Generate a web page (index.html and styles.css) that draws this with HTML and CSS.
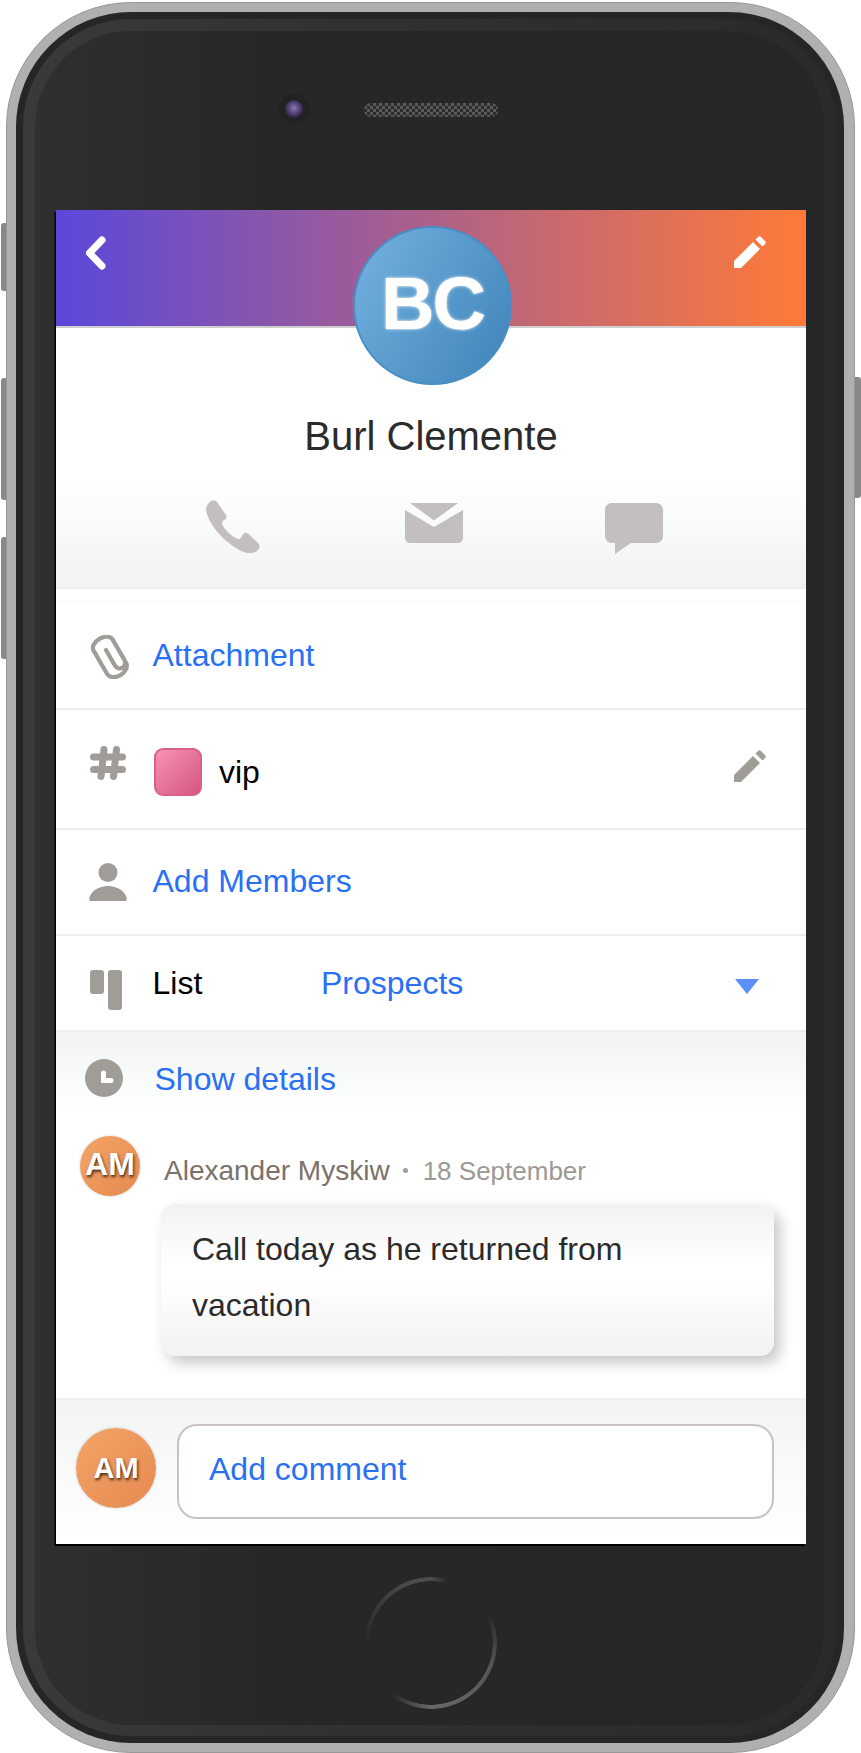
FILE: index.html
```html
<!DOCTYPE html>
<html lang="en">
<head>
<meta charset="utf-8">
<title>Burl Clemente</title>
<link rel="stylesheet" href="styles.css">
</head>
<body>
<div class="device">
  <span class="side-btn btn-mute"></span>
  <span class="side-btn btn-up"></span>
  <span class="side-btn btn-down"></span>
  <span class="side-btn btn-power"></span>
  <div class="shell">
    <div class="bezel-dark">
      <div class="bezel-light">
        <div class="face">
          <div class="top-bar">
            <div class="camera"><span class="lens"></span></div>
            <div class="speaker"></div>
          </div>
          <main class="screen">
            <header class="header">
              <svg class="back" viewBox="0 0 21 34"><path d="M17 4 L4.500 17 L17 30" fill="none" stroke="#fff" stroke-width="7" stroke-linecap="round" stroke-linejoin="round"/></svg>
              <svg class="edit-white" viewBox="0 0 32 32"><path fill="#fff" d="M0 32V25L19 6L26 13L7 32ZM21.500 3.500L24 1C25 0 26 0 27 1L31 5C32 6 32 7 31 8L28.500 10.500Z"/></svg>
            </header>
            <section class="profile">
              <div class="avatar-big">BC</div>
              <h1 class="name">Burl Clemente</h1>
              <div class="actions">
                <svg class="ic-phone" viewBox="0 0 54 53"><path fill="#c3bfbe" d="M3 3C5 0 9 0 11 2L20 15C21.500 17 20 19 18 20C16 21 15.500 23 17 26C21 32 26 37 32 39C34 39.500 35 38 36.500 35C38 32.500 40 32 42 33.500L52 43C54 45 54 48 52 50C49 53 44 54 39 52.500C24 47 6 30 1 14C-.5 9 0 6 3 3Z"/></svg>
                <svg class="ic-mail" viewBox="0 0 58 40"><path fill="#c3bfbe" d="M5 0H53L29 17.500ZM0 7L29 24L58 7V34C58 38 56 40 52 40H6C2 40 0 38 0 34Z"/></svg>
                <svg class="ic-chat" viewBox="0 0 58 51"><path fill="#c3bfbe" d="M7 0H51C55 0 58 3 58 7V33C58 37 55 40 51 40H26L10 51V40H7C3 40 0 37 0 33V7C0 3 3 0 7 0Z"/></svg>
              </div>
            </section>
            <div class="spacer"></div>
            <div class="row row-attach">
              <svg class="ic-clip" viewBox="0 0 41 44"><g transform="rotate(-30 20 22)"><path fill="none" stroke="#a09d98" stroke-width="4.200" stroke-linecap="round" d="M20 14V32A5 5 0 0 0 31 32V8A11 7 0 0 0 9 8V35A11 8 0 0 0 31 35"/></g></svg>
              <a class="link">Attachment</a>
            </div>
            <div class="row row-tag">
              <svg class="ic-hash" viewBox="0 0 36 34"><path fill="none" stroke="#a09d98" stroke-width="7" stroke-linecap="round" d="M3.500 11H32.500M3.500 23.500H32.500M14 3.500L11 30.500M26.500 3.500L23.500 30.500"/></svg>
              <span class="tag-swatch"></span>
              <span class="tag-text">vip</span>
              <svg class="edit-gray" viewBox="0 0 32 32"><path fill="#a09d98" d="M0 32V25L19 6L26 13L7 32ZM21.500 3.500L24 1C25 0 26 0 27 1L31 5C32 6 32 7 31 8L28.500 10.500Z"/></svg>
            </div>
            <div class="row row-members">
              <svg class="ic-person" viewBox="0 0 38 38"><circle cx="19" cy="9.500" r="9.500" fill="#a09d98"/><path fill="#a09d98" d="M2 38C0 38 0 36 .5 34.500C2 28 10 23 19 23C28 23 36 28 37.500 34.500C38 36 38 38 36 38Z"/></svg>
              <a class="link">Add Members</a>
            </div>
            <div class="row row-list">
              <div class="ic-list"><span class="bar-short"></span><span class="bar-long"></span></div>
              <span class="list-label">List</span>
              <a class="link list-value">Prospects</a>
              <span class="caret"></span>
            </div>
            <section class="activity">
              <div class="details">
                <svg class="ic-clock" viewBox="0 0 38 38"><circle cx="19" cy="19" r="19" fill="#a09d98"/><path fill="none" stroke="#fff" stroke-width="5" stroke-linecap="round" d="M18.500 14V21.500H26"/></svg>
                <a class="link">Show details</a>
              </div>
              <div class="comment-head">
                <div class="avatar-small">AM</div>
                <span class="author">Alexander Myskiw</span>
                <span class="dot"></span>
                <span class="date">18 September</span>
              </div>
              <div class="bubble">Call today as he returned from vacation</div>
            </section>
            <footer class="composer">
              <div class="avatar-medium">AM</div>
              <div class="input"><a class="link">Add comment</a></div>
            </footer>
          </main>
          <div class="home"></div>
        </div>
      </div>
    </div>
  </div>
</div>
</body>
</html>
```
FILE: styles.css
```css
* { box-sizing: border-box; }
html, body { margin: 0; padding: 0; background: #fff; }
body { font-family: "Liberation Sans", Arial, sans-serif; overflow: hidden; }

.device { position: relative; width: 861px; height: 1753px; padding: 2px 6px 0 6px; }
.side-btn { position: absolute; background: #88888c; width: 6px; }
.btn-mute { left: 1px; top: 223px; height: 68px; border-radius: 3px 0 0 3px; }
.btn-up { left: 1px; top: 378px; height: 122px; border-radius: 3px 0 0 3px; }
.btn-down { left: 1px; top: 537px; height: 122px; border-radius: 3px 0 0 3px; }
.btn-power { left: 855px; top: 377px; height: 121px; border-radius: 0 3px 3px 0; }

.shell { position: relative; height: 100%; background: #b0b0b0; border: 1px solid #979797; border-radius: 125px; padding: 9px 10px 9px 9px; }
.bezel-dark { height: 100%; background: #262626; border-radius: 115px; padding: 7px 8px 7px 7px; }
.bezel-light { height: 100%; background: linear-gradient(90deg, #3a3a3a, #313131 40%, #2a2a2a); border-radius: 108px; padding: 12px 12px 11px; }
.face { height: 100%; border-radius: 96px; background: linear-gradient(90deg, #2f2f2f, #272727 30%, #262626); padding-left: 21px; }

.top-bar { height: 179px; display: flex; align-items: flex-start; padding: 63px 0 0 223px; }
.camera { width: 30px; height: 30px; border-radius: 50%; background: #222; display: flex; align-items: center; justify-content: center; }
.lens { width: 18px; height: 18px; border-radius: 50%; background: radial-gradient(circle at 50% 45%, #8a7aa8 0, #6a568f 25%, #3a2f55 60%, #1c1a22 100%); }
.speaker { width: 134px; height: 14px; margin: 9px 0 0 55px; border-radius: 7px; background: repeating-conic-gradient(#5a5a5a 0 25%, #2c2c2c 0 50%) 0 0 / 6px 6px; }

.screen { width: 750px; height: 1334px; background: #fff; box-shadow: -1.500px 2px 0 #000; display: flex; flex-direction: column; }

.header { position: relative; height: 118px; border-bottom: 2px solid #cfcfcf; background: linear-gradient(90deg, #5b48da, #ff7a38); display: flex; justify-content: space-between; align-items: flex-start; padding: 26px 40px 0 29px; }
.back { width: 21px; height: 34px; }
.edit-white { width: 32px; height: 32px; }

.profile { height: 261px; background: linear-gradient(#fff 150px, #f2f4f4 250px); display: flex; flex-direction: column; align-items: center; border-bottom: 2px solid #eee; }
.avatar-big { position: relative; width: 159px; height: 159px; margin: -102px 0 0 3px; flex: none; border-radius: 50%; border: 2px solid #4a8fc4; background: linear-gradient(120deg, #74b2e0, #3e83b9); color: #fff; font-weight: 700; font-size: 74px; letter-spacing: -2px; line-height: 152px; text-align: center; text-shadow: 0 0 2px #fff, 0 0 4px rgba(255,255,255,.5); }
.name { margin: 28px 0 0; font-size: 40px; line-height: 46px; font-weight: 400; color: #2b2b2b; }
.actions { align-self: flex-start; display: flex; align-items: flex-start; margin: 41px 0 0 150px; }
.ic-phone { width: 54px; height: 53px; }
.ic-mail { width: 58px; height: 40px; margin: 3px 0 0 145px; }
.ic-chat { width: 58px; height: 51px; margin: 3px 0 0 142px; }

.spacer { height: 12px; flex: none; border-bottom: 1px solid #fafafa; }

.row { display: flex; align-items: flex-start; border-bottom: 2px solid #eee; flex: none; }
.link { color: #2970f5; font-size: 32px; line-height: 40px; }
.row-attach { height: 109px; padding: 34px 0 0 34px; }
.ic-clip { width: 41px; height: 44px; margin-right: 21.500px; }
.row-tag { height: 120px; padding: 36px 0 0 34px; }
.ic-hash { width: 36px; height: 34px; margin-right: 28px; }
.tag-swatch { width: 48px; height: 48px; margin-top: 2px; border-radius: 9px; border: 2px solid #da6089; background: linear-gradient(135deg, #f792b3, #d5567f); }
.tag-text { margin: 6px 0 0 17px; color: #000; font-size: 32px; line-height: 40px; }
.edit-gray { width: 32px; height: 32px; margin: 4px 40px 0 auto; }
.row-members { height: 106px; padding: 31px 0 0 33px; }
.ic-person { width: 38px; height: 38px; margin: 2px 25.500px 0 0; }
.row-list { height: 96px; padding: 27px 0 0 34px; }
.ic-list { display: flex; gap: 4px; margin: 7px 30.500px 0 0; align-items: flex-start; }
.bar-short { width: 14px; height: 24px; border-radius: 3px; background: #a09d98; }
.bar-long { width: 14px; height: 40px; border-radius: 3px; background: #a09d98; }
.list-label { color: #000; font-size: 32px; line-height: 40px; width: 168.500px; }
.list-value { flex: none; }
.caret { width: 0; height: 0; margin: 16px 47px 0 auto; border-left: 12.500px solid transparent; border-right: 12.500px solid transparent; border-top: 15px solid #5b8ff9; }

.activity { height: 366px; background: linear-gradient(#f2f4f4, #fff 80px); flex: none; }
.details { display: flex; align-items: flex-start; padding: 27px 0 0 29px; gap: 31.500px; }
.ic-clock { width: 38px; height: 38px; }
.comment-head { display: flex; align-items: flex-start; margin: 37px 0 0 24px; height: 60px; }
.avatar-small { width: 60px; height: 60px; flex: none; border-radius: 50%; background: linear-gradient(135deg, #f4a467, #e58a50); box-shadow: 0 0 3px rgba(0,0,0,.2); color: #fff; font-weight: 700; font-size: 32px; line-height: 56px; text-align: center; text-shadow: 1px 2px 3px rgba(50,25,10,.9); }
.author { margin: 17px 0 0 24px; font-size: 28px; line-height: 36px; color: #7b716b; }
.dot { width: 5px; height: 5px; border-radius: 50%; background: #a09d98; margin: 32px 0 0 13px; }
.date { margin: 17px 0 0 15px; font-size: 26px; line-height: 36px; color: #9d9893; }
.bubble { width: 613.500px; height: 152px; margin: 8px 0 0 104.500px; padding: 17px 80px 0 31.500px; border-radius: 14px; background: linear-gradient(#f2f2f2, #fff 40%, #fff 50%, #f2f2f2); box-shadow: 6px 7px 14px rgba(0,0,0,.22); color: #2b2b2b; font-size: 32px; line-height: 56px; }

.composer { flex: 1; display: flex; align-items: flex-start; border-top: 2px solid #f0f0f0; background: linear-gradient(#f2f4f4, #fff); padding: 24px 0 0 20px; gap: 21px; }
.avatar-medium { width: 80px; height: 80px; flex: none; margin-top: 4px; border-radius: 50%; background: linear-gradient(135deg, #f4a467, #e58a50); box-shadow: 0 0 3px rgba(0,0,0,.2); color: #fff; font-weight: 700; font-size: 29px; line-height: 80px; text-align: center; text-shadow: 1px 2px 3px rgba(50,25,10,.9); }
.input { width: 597px; height: 95px; border: 2px solid #cbc3c3; border-radius: 20px; background: #fff; padding: 23px 0 0 30px; }

.home { width: 132px; height: 132px; margin: 33px 0 0 309px; border-radius: 50%; background: conic-gradient(#4c4c4c 0deg, rgba(80,80,80,0) 16deg, rgba(100,100,100,0) 62deg, #555 110deg, #686868 180deg, rgba(100,100,100,0) 218deg, rgba(80,80,80,0) 268deg, #4c4c4c 340deg); -webkit-mask: radial-gradient(closest-side, transparent calc(100% - 4.500px), #000 calc(100% - 4px)); mask: radial-gradient(closest-side, transparent calc(100% - 4.500px), #000 calc(100% - 4px)); }
```
